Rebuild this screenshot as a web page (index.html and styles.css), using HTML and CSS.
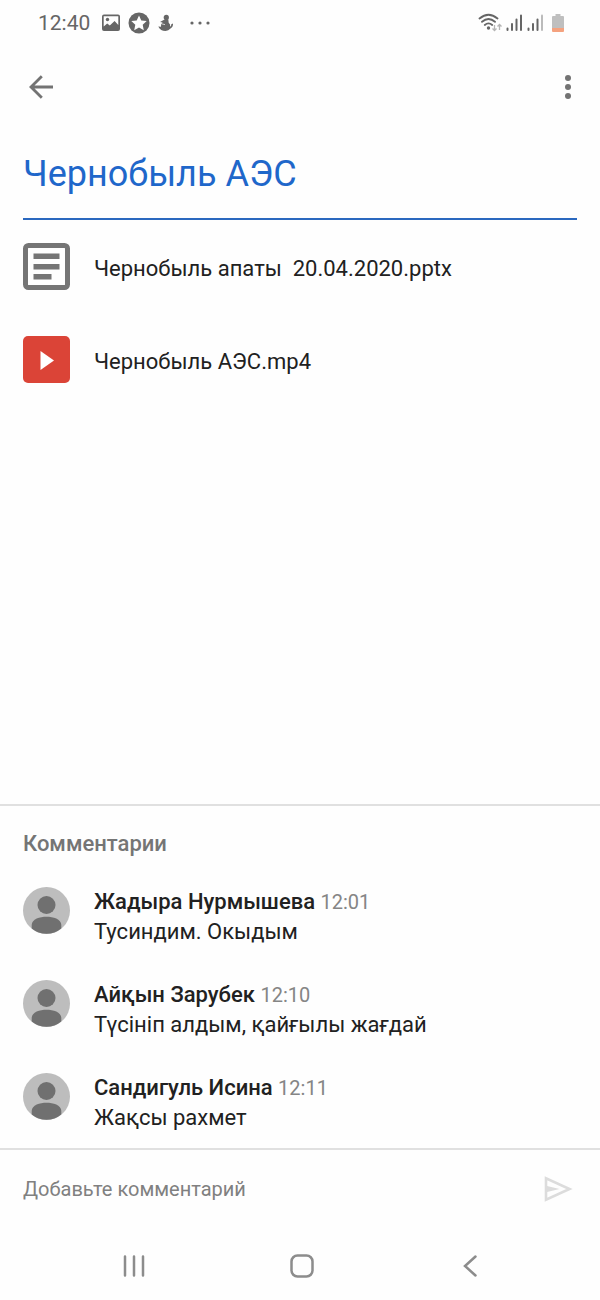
FILE: index.html
```html
<!DOCTYPE html>
<html lang="ru">

<head>
    <meta charset="UTF-8">
    <meta name="viewport" content="width=device-width, initial-scale=1.0">
    <title>Чернобыль АЭС</title>
    <link rel="stylesheet" href="styles.css">
</head>

<body>
    <div class="status-bar">
        <div class="status-left">
            <span class="clock">12:40</span>
            <svg class="icon-picture" width="18" height="18" viewBox="0 0 18 18">
                <path fill="#666" fill-rule="evenodd" d="M2 .5h14Q18 .5 18 2.500v12.500Q18 17 16 17H2Q0 17 0 15V2.500Q0 .5 2 .5zM1.700 2.200v10.300l3.500-3 2.600 2 4.800-4.500 3.700 4V2.200z" />
                <circle cx="5.500" cy="5.500" r="1.700" fill="#666" />
            </svg>
            <svg class="icon-star" width="22" height="22" viewBox="0 0 22 22">
                <circle cx="11" cy="11" r="10.500" fill="#666" />
                <path fill="#fff" d="M11 3.500l2.300 5 5.400.6-4 3.700 1.100 5.400-4.800-2.700-4.800 2.700 1.100-5.400-4-3.700 5.400-.6z" />
            </svg>
            <svg class="icon-figure" width="16" height="18" viewBox="0 0 16 18">
                <circle cx="8.300" cy="3.400" r="2.600" fill="#666" />
                <path fill="#666" d="M6.500 5.500h3.800l.4 3.300q2 1.700 1.400 4 1.300-.8 1.200-2.600l1.700-.6q.3 3.400-2.500 5Q10.500 17 7.500 17 2.500 17 .3 12.500l2.700.2q-.5-2.700 1.600-4.200L2 8z" />
                <path stroke="#fff" stroke-width=".7" fill="none" d="M3.500 9.800l3.500.8" />
            </svg>
            <svg class="icon-more" width="20" height="4" viewBox="0 0 20 4" fill="#666">
                <circle cx="2" cy="2" r="1.600" />
                <circle cx="10" cy="2" r="1.600" />
                <circle cx="18" cy="2" r="1.600" />
            </svg>
        </div>
        <div class="status-right">
            <svg width="24" height="20" viewBox="0 0 24 20" fill="none">
                <path stroke="#666" stroke-width="1.800" stroke-linecap="round" d="M1.500 5.500Q10.500-2 19.500 5.500M4 8.800q6.500-5.500 13 0M6.800 12q3.700-3.300 7.400 0" />
                <circle cx="10.500" cy="15" r="1.700" fill="#666" />
                <path stroke="#b5b5b5" stroke-width="1.300" d="M16.500 12v5.500M14.500 15.500l2 2 2-2M21.500 17v-5.500M19.500 13.500l2-2 2 2" />
            </svg>
            <svg width="17" height="18" viewBox="0 0 17 18" stroke="#666" stroke-width="2" stroke-linecap="round">
                <path d="M1.500 14.500V16M6 10v6M10.500 5.500V16M15 1.500V16" />
            </svg>
            <svg width="17" height="18" viewBox="0 0 17 18" stroke="#666" stroke-width="2" stroke-linecap="round">
                <path d="M1.500 14.500V16M6 10v6M10.500 5.500V16" />
                <path stroke="#bbb" d="M15 1.500V16" />
            </svg>
            <svg class="icon-battery" width="12" height="18" viewBox="0 0 12 18">
                <path fill="#bfbfbf" d="M3.500 0h5v2H11q1 0 1 1v11H0V3q0-1 1-1h2.500z" />
                <path fill="#f4a27f" d="M0 14h12v3q0 1-1 1H1q-1 0-1-1z" />
            </svg>
        </div>
    </div>

    <header class="app-bar">
        <button class="icon-button" aria-label="Назад">
            <svg width="24" height="24" viewBox="0 0 24 24" fill="none" stroke="#737373" stroke-width="2.800">
                <path d="M24 12H2.500M12.800 1.200L2 12l10.800 10.800" />
            </svg>
        </button>
        <button class="icon-button" aria-label="Ещё">
            <svg width="6" height="24" viewBox="0 0 6 24" fill="#737373">
                <circle cx="3" cy="3" r="3" />
                <circle cx="3" cy="12" r="3" />
                <circle cx="3" cy="21" r="3" />
            </svg>
        </button>
    </header>

    <main class="material">
        <h1>Чернобыль АЭС</h1>
        <a class="attachment" href="#">
            <svg width="47" height="47" viewBox="0 0 47 47">
                <rect x="2.500" y="2.500" width="42" height="42" rx="3" fill="none" stroke="#757575" stroke-width="5" />
                <path fill="#757575" d="M10.500 10.500h26v5.500h-26zM10.500 21h26v5.500h-26zM10.500 31h18v5.500h-18z" />
            </svg>
            <span>Чернобыль апаты  20.04.2020.pptx</span>
        </a>
        <a class="attachment" href="#">
            <svg width="47" height="47" viewBox="0 0 47 47">
                <rect width="47" height="47" rx="5" fill="#db4437" />
                <path fill="#fff" d="M17.500 15v19l13.500-9.500z" />
            </svg>
            <span>Чернобыль АЭС.mp4</span>
        </a>
    </main>

    <section class="comments">
        <h2>Комментарии</h2>
        <article class="comment">
            <svg class="avatar" width="47" height="47" viewBox="0 0 47 47">
                <circle cx="23.500" cy="23.500" r="23.500" fill="#bdbdbd" />
                <circle cx="23.500" cy="18" r="9" fill="#707070" />
                <path fill="#707070" d="M8.700 41.500V38C8.700 32 17 29.800 23.500 29.800S38.300 32 38.300 38v3.500A23.500 23.500 0 0 1 8.700 41.500z" />
            </svg>
            <div class="comment-body">
                <p><strong>Жадыра Нурмышева</strong> <time>12:01</time></p>
                <p>Тусиндим. Окыдым</p>
            </div>
        </article>
        <article class="comment">
            <svg class="avatar" width="47" height="47" viewBox="0 0 47 47">
                <circle cx="23.500" cy="23.500" r="23.500" fill="#bdbdbd" />
                <circle cx="23.500" cy="18" r="9" fill="#707070" />
                <path fill="#707070" d="M8.700 41.500V38C8.700 32 17 29.800 23.500 29.800S38.300 32 38.300 38v3.500A23.500 23.500 0 0 1 8.700 41.500z" />
            </svg>
            <div class="comment-body">
                <p><strong>Айқын Зарубек</strong> <time>12:10</time></p>
                <p>Түсініп алдым, қайғылы жағдай</p>
            </div>
        </article>
        <article class="comment">
            <svg class="avatar" width="47" height="47" viewBox="0 0 47 47">
                <circle cx="23.500" cy="23.500" r="23.500" fill="#bdbdbd" />
                <circle cx="23.500" cy="18" r="9" fill="#707070" />
                <path fill="#707070" d="M8.700 41.500V38C8.700 32 17 29.800 23.500 29.800S38.300 32 38.300 38v3.500A23.500 23.500 0 0 1 8.700 41.500z" />
            </svg>
            <div class="comment-body">
                <p><strong>Сандигуль Исина</strong> <time>12:11</time></p>
                <p>Жақсы рахмет</p>
            </div>
        </article>
    </section>

    <form class="composer">
        <input type="text" aria-label="Добавьте комментарий" placeholder="Добавьте комментарий">
        <button class="icon-button" type="button" aria-label="Отправить">
            <svg width="29" height="26" viewBox="0 0 29 26">
                <path fill="none" stroke="#dcdcdc" stroke-width="2.600" d="M2 2.300v21.400L25.500 13z" />
                <path fill="#dcdcdc" d="M2 9.800L15.500 13 2 16.200z" />
            </svg>
        </button>
    </form>

    <nav class="nav-bar">
        <button class="icon-button" aria-label="Недавние">
            <svg width="22" height="22" viewBox="0 0 22 22" stroke="#8c8c8c" stroke-width="2.500" stroke-linecap="round">
                <path d="M2 1.500v19M11 1.500v19M20 1.500v19" />
            </svg>
        </button>
        <button class="icon-button" aria-label="Домой">
            <svg width="24" height="24" viewBox="0 0 24 24" fill="none" stroke="#8c8c8c" stroke-width="2.500">
                <rect x="1.500" y="1.500" width="21" height="21" rx="6" />
            </svg>
        </button>
        <button class="icon-button" aria-label="Назад">
            <svg width="14" height="22" viewBox="0 0 14 22" fill="none" stroke="#8c8c8c" stroke-width="2.500" stroke-linecap="round">
                <path d="M12.500 1.500L2 11l10.500 9.500" />
            </svg>
        </button>
    </nav>
</body>

</html>
```
FILE: styles.css
```css
/* General Styling */
* {
    box-sizing: border-box;
}

body {
    font-family: Roboto, "Noto Sans", sans-serif;
    margin: 0;
    min-height: 100vh;
    display: flex;
    flex-direction: column;
    background: #fefefe;
    color: #212121;
    font-size: 22px;
}

h1,
h2,
p {
    margin: 0;
    font-weight: 400;
}

svg {
    display: block;
    flex-shrink: 0;
}

.icon-button {
    display: flex;
    align-items: center;
    justify-content: center;
    padding: 0;
    border: none;
    background: none;
    cursor: pointer;
}

/* Status Bar */
.status-bar {
    display: flex;
    justify-content: space-between;
    align-items: center;
    height: 46px;
    padding: 0 36px 0 38px;
    color: #666;
}

.status-left {
    display: flex;
    align-items: center;
    gap: 8px;
}

.clock {
    margin-right: 4px;
    font-size: 21px;
}

.icon-more {
    margin-left: 8px;
}

.status-right {
    display: flex;
    align-items: center;
    gap: 4px;
}

.icon-battery {
    margin-left: 4px;
}

/* App Bar */
.app-bar {
    display: flex;
    justify-content: space-between;
    align-items: center;
    height: 82px;
    padding: 0 29px;
}

/* Material */
.material {
    flex: 1;
    display: flex;
    flex-direction: column;
    padding: 0 23px;
}

h1 {
    height: 92px;
    margin-bottom: 23px;
    border-bottom: 2px solid #2a68bf;
    color: #1f67ca;
    font-size: 36px;
    line-height: 92px;
}

.attachment {
    display: flex;
    align-items: center;
    gap: 24px;
    margin-bottom: 46px;
    color: inherit;
    text-decoration: none;
    white-space: pre;
}

.attachment span {
    padding-top: 3px;
}

/* Comments */
.comments {
    padding: 23px 23px 0;
    border-top: 2px solid #e0e0e0;
}

h2 {
    margin-bottom: 28px;
    color: #757575;
    font-size: 22px;
    font-weight: 500;
    line-height: 30px;
}

.comment {
    display: flex;
    align-items: flex-start;
    gap: 24px;
    margin-bottom: 33px;
}

.comment:last-child {
    margin-bottom: 15px;
}

.comment-body {
    line-height: 30px;
}

.comment strong {
    font-weight: 500;
}

.comment time {
    color: #858585;
    font-size: 20px;
}

/* New Comment */
.composer {
    display: flex;
    align-items: center;
    height: 84px;
    padding: 0 27px 4px 23px;
    border-top: 2px solid #e0e0e0;
}

.composer input {
    flex: 1;
    min-width: 0;
    padding: 0;
    border: none;
    outline: none;
    background: none;
    font-family: inherit;
    font-size: 20px;
}

.composer input::placeholder {
    color: #808080;
}

/* Navigation */
.nav-bar {
    display: flex;
    height: 68px;
    padding: 0 46px 0 50px;
}

.nav-bar .icon-button {
    flex: 1;
}
```
